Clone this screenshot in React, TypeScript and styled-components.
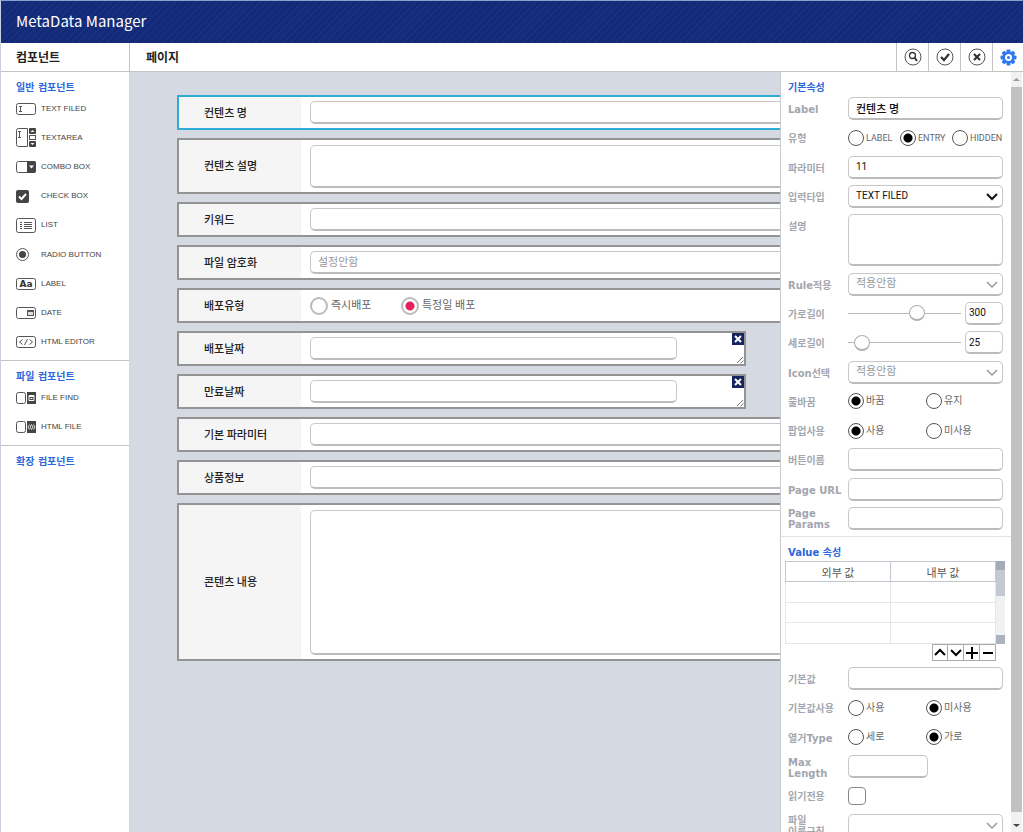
import React from 'react';
import styled, { createGlobalStyle, css } from 'styled-components';

const KR = '"Noto Sans CJK KR", sans-serif';

const GlobalStyle = createGlobalStyle`
  *, *::before, *::after { box-sizing: border-box; }
  html, body, #root { height: 100%; }
  body { margin: 0; overflow: hidden; font-family: "Liberation Sans", ${KR}; background: #fff; }
  button, input, select, textarea { font-family: inherit; margin: 0; }
  h1, h2, h3, ul { margin: 0; padding: 0; }
  ul { list-style: none; }
`;

const Page = styled.div`
  display: flex;
  flex-direction: column;
  height: 100%;
  border: 1px solid #c9cfdf;
  border-top-color: #8d9fcf;
  border-bottom: 0;
`;

const Header = styled.header`
  flex: none;
  height: 42px;
  padding: 0 0 2px 15px;
  display: flex;
  align-items: center;
  background: repeating-linear-gradient(135deg, #122a78 0 3px, #182f7f 3px 5px);
`;

const AppTitle = styled.h1`
  font: 400 15px/20px ${KR};
  color: #fff;
`;

const TopBar = styled.div`
  flex: none;
  height: 29px;
  display: flex;
  border-bottom: 1px solid #c4c4c4;
`;

const BarTitle = styled.h2<{ $side?: boolean }>`
  font: 700 12px/27px ${KR};
  color: #222;
  padding-left: ${p => (p.$side ? 15 : 16)}px;
  ${p => (p.$side ? css`width: 129px; border-right: 1px solid #c4c4c4;` : css`flex: 1;`)}
`;

const ToolButton = styled.button`
  width: 32px;
  padding: 0;
  border: 0;
  border-left: 1px solid #c4c4c4;
  background: none;
  display: flex;
  align-items: center;
  justify-content: center;
  &:last-child { width: 31px; }
`;

const Body = styled.div`
  flex: 1;
  min-height: 0;
  display: flex;
`;

const Sidebar = styled.nav`
  flex: none;
  width: 129px;
  border-right: 1px solid #d4d8e0;
  background: #fff;
`;

const SideGroup = styled.section`
  padding: 9px 0 3px;
  border-bottom: 1px solid #c4c4c4;
  &:last-child { border-bottom: 0; }
`;

const SectionTitle = styled.h3<{ $left: number }>`
  font: 700 10px/13px "DejaVu Sans", ${KR};
  color: #2a66dc;
  padding-left: ${p => p.$left}px;
`;

const ItemList = styled.ul<{ $height: number }>`
  display: flex;
  flex-direction: column;
  height: ${p => p.$height}px;
`;

const Item = styled.li`
  flex: 1;
  display: flex;
`;

const ItemButton = styled.button`
  flex: 1;
  display: flex;
  align-items: center;
  padding: 0 0 0 15px;
  border: 0;
  background: none;
  font-size: 8px;
  line-height: 12px;
  color: #444;
`;

const ItemIcon = styled.span`
  width: 25px;
  display: flex;
`;

const Canvas = styled.main`
  flex: 1;
  min-width: 0;
  overflow: hidden;
  padding: 23px 0 0 47px;
  background: #d5d9e2;
  display: flex;
  flex-direction: column;
  align-items: flex-start;
  gap: 8px;
`;

const Card = styled.div<{ $height: number; $active?: boolean; $short?: boolean }>`
  flex: none;
  position: relative;
  display: flex;
  width: ${p => (p.$short ? '569px' : '120%')};
  height: ${p => p.$height}px;
  border: 2px solid ${p => (p.$active ? '#2fabd8' : '#949494')};
  background: #fff;
`;

const CardLabel = styled.label`
  width: 122px;
  padding: 0 0 2px 25px;
  display: flex;
  align-items: center;
  background: #f5f5f5;
  font: 500 11px/16px ${KR};
  color: #222;
`;

const CardBody = styled.div`
  flex: 1;
  display: flex;
  align-items: center;
  padding: 0 9px;
`;

const box = css`
  display: block;
  border: 1px solid #c8c8c8;
  border-bottom: 2px solid #bcbcbc;
  border-radius: 5px;
  background: #fff;
  outline: 0;
  padding: 0 7px;
`;

const Input = styled.input<{ $width?: number; $size?: number; $tight?: boolean }>`
  ${box}
  width: ${p => (p.$width ? `${p.$width}px` : '100%')};
  height: 23px;
  font: ${p => (p.$size ? 400 : 500)} ${p => p.$size ?? 11}px/20px Roboto, ${KR};
  color: #111;
  padding: 0 ${p => (p.$tight ? 3 : 7)}px;
`;

const Area = styled.textarea<{ $height: number }>`
  ${box}
  width: 100%;
  height: ${p => p.$height}px;
  resize: none;
`;

const SelectWrap = styled.div`
  position: relative;
  width: 100%;
`;

const SelectBox = styled.select<{ $dim?: boolean }>`
  ${box}
  appearance: none;
  width: 100%;
  height: 23px;
  font: 400 ${p => (p.$dim ? 11 : 10)}px/19px Roboto, ${KR};
  color: ${p => (p.$dim ? '#999' : '#111')};
`;

const Chevron = styled.svg`
  position: absolute;
  right: 5px;
  top: 8px;
  pointer-events: none;
`;

const Radio = styled.input<{ $tone?: 'pink' }>`
  appearance: none;
  flex: none;
  width: ${p => (p.$tone ? 18 : 16)}px;
  height: ${p => (p.$tone ? 18 : 16)}px;
  border: ${p => (p.$tone ? '2px solid #bbb' : '1px solid #555')};
  border-radius: 50%;
  background: #fff;
  &:checked {
    background: radial-gradient(circle, ${p => (p.$tone ? '#e3225c' : '#000')} 0 4px, #fff 5px);
  }
`;

const RadioLabel = styled.label<{ $width: number; $size: number }>`
  flex: none;
  width: ${p => p.$width}px;
  display: flex;
  align-items: center;
  gap: ${p => (p.$size > 10 ? 3 : 2)}px;
  font: 400 ${p => p.$size}px/16px Roboto, ${KR};
  color: #666;
  white-space: nowrap;
`;

const RadioRow = styled.div`
  display: flex;
`;

const CloseButton = styled.button`
  position: absolute;
  top: 0;
  right: 0;
  width: 12px;
  height: 12px;
  padding: 0;
  border: 0;
  background: #16245f;
  display: flex;
  align-items: center;
  justify-content: center;
`;

const Grip = styled.svg`
  position: absolute;
  right: 0;
  bottom: 0;
`;

const Panel = styled.aside`
  flex: none;
  width: 243px;
  display: flex;
  border-left: 1px solid #c9ccd2;
  background: #fff;
`;

const PanelScroll = styled.div`
  flex: 1;
  overflow: hidden;
`;

const Group = styled.section`
  padding: 9px 0 3px;
  & + & { border-top: 1px solid #e2e2e2; }
`;

const Rows = styled.div<{ $height: number }>`
  display: flex;
  flex-direction: column;
  height: ${p => p.$height}px;
  padding: 0 8px 0 7px;
`;

const Row = styled.div<{ $units?: number }>`
  flex: ${p => p.$units ?? 1} 1 0;
  min-height: 0;
  display: flex;
  align-items: center;
`;

const RowLabel = styled.label<{ $top?: boolean }>`
  flex: none;
  width: 60px;
  padding: ${p => (p.$top ? 10 : 2)}px 5px 0 0;
  align-self: ${p => (p.$top ? 'flex-start' : 'center')};
  font: 700 10px/11px "DejaVu Sans", ${KR};
  word-break: keep-all;
  color: #a3a6ae;
`;

const RowControl = styled.div`
  flex: 1;
  min-width: 0;
  display: flex;
  align-items: center;
  gap: 4px;
`;

const Slider = styled.input`
  appearance: none;
  flex: 1;
  min-width: 0;
  height: 18px;
  background: linear-gradient(#b8b8b8, #b8b8b8) center / 100% 1px no-repeat;
  &::-webkit-slider-thumb {
    appearance: none;
    width: 16px;
    height: 16px;
    border: 1px solid #b0b0b0;
    border-bottom-width: 2px;
    border-radius: 50%;
    background: #fff;
  }
`;

const CheckBox = styled.input`
  appearance: none;
  width: 18px;
  height: 18px;
  border: 1px solid #888;
  border-radius: 4px;
  background: #fff;
`;

const TableWrap = styled.div`
  display: flex;
  height: 83px;
  margin: 2px 6px 0 4px;
`;

const Table = styled.table`
  flex: 1;
  border-collapse: collapse;
  table-layout: fixed;
  border: 1px solid #bfc3ca;
  th { height: 20px; padding: 0; font: 400 11px/18px ${KR}; color: #555; border: 1px solid #c4c7cd; }
  td { padding: 0; border: 1px solid #e6e6e6; }
`;

const MiniTrack = styled.div`
  width: 9px;
  background: #f0f1f3;
  display: flex;
  flex-direction: column;
  &::before { content: ''; height: 35px; background: #c3c8d1; border-top: 9px solid #a3abb8; }
  &::after { content: ''; height: 9px; margin-top: auto; background: #adb3bd; }
`;

const MiniButtons = styled.div`
  display: flex;
  justify-content: flex-end;
  padding-right: 15px;
  margin-bottom: 3px;
`;

const MiniButton = styled.button`
  width: 16px;
  height: 17px;
  padding: 0;
  border: 1px solid #aaa;
  background: #fff;
  display: flex;
  align-items: center;
  justify-content: center;
  & + & { border-left: 0; }
`;

const Scrollbar = styled.div`
  flex: none;
  width: 12px;
  display: flex;
  flex-direction: column;
  align-items: center;
  background: #f1f1f1;
  border-right: 1px solid #fff;
`;

const ScrollArrow = styled.svg`
  flex: none;
  margin: 4px 0;
`;

const ScrollThumb = styled.div`
  flex: 1;
  width: 100%;
  background: #c1c1c1;
`;

const Svg = ({ w = 20, h = 12, children }: { w?: number; h?: number; children: React.ReactNode }) => (
  <svg width={w} height={h} viewBox={`0 0 ${w} ${h}`} fill="none" stroke="#555" strokeWidth="1" aria-hidden="true">
    {children}
  </svg>
);

const icons = {
  text: (
    <Svg><rect x=".5" y=".5" width="19" height="11" rx="2" /><path d="M3 3.500h3M3 8.500h3M4.500 3.500v5" /></Svg>
  ),
  area: (
    <Svg h={19}>
      <path d="M11.500 .500H2.500a2 2 0 0 0-2 2v14a2 2 0 0 0 2 2h9zM2 3.500h3M2 9.500h3M3.500 3.500v6" />
      <rect x="13" y="0" width="7" height="6" rx="1" fill="#444" stroke="none" />
      <rect x="13" y="13" width="7" height="6" rx="1" fill="#444" stroke="none" />
      <rect x="13.500" y="7.500" width="6" height="4" />
      <path d="M14.500 4h4l-2-2zM14.500 15h4l-2 2z" fill="#fff" stroke="none" />
    </Svg>
  ),
  combo: (
    <Svg>
      <rect x=".5" y=".5" width="19" height="11" rx="2" />
      <path d="M11 0h7a2 2 0 0 1 2 2v8a2 2 0 0 1-2 2h-7z" fill="#444" stroke="none" />
      <path d="M13 4.500h5l-2.500 3z" fill="#fff" stroke="none" />
    </Svg>
  ),
  check: (
    <Svg w={13} h={13}>
      <rect width="13" height="13" rx="2" fill="#444" stroke="none" />
      <path d="M3 6.500l2.500 2.500l4.500-5" stroke="#fff" strokeWidth="2" />
    </Svg>
  ),
  list: (
    <Svg h={15}>
      <rect x=".5" y=".5" width="19" height="14" rx="2" />
      <path d="M4 4.500h2M8 4.500h8M4 6.500h2M8 6.500h8M4 8.500h2M8 8.500h8M4 10.500h2M8 10.500h8" />
    </Svg>
  ),
  radio: (
    <Svg w={13} h={13}><circle cx="6.500" cy="6.500" r="6" /><circle cx="6.500" cy="6.500" r="3.500" fill="#444" stroke="none" /></Svg>
  ),
  label: (
    <Svg>
      <rect x=".5" y=".5" width="19" height="11" rx="2" />
      <text x="10" y="9" textAnchor="middle" fontSize="9" fontWeight="700" fontFamily="DejaVu Sans" fill="#333" stroke="none">Aa</text>
    </Svg>
  ),
  date: (
    <Svg>
      <rect x=".5" y=".5" width="19" height="11" rx="2" />
      <rect x="11.500" y="3.500" width="6" height="5" fill="#ddd" /><path d="M11 4h7" strokeWidth="2" />
    </Svg>
  ),
  html: (
    <Svg>
      <rect x=".5" y=".5" width="19" height="11" rx="2" />
      <path d="M6.500 3.500L3.500 6l3 2.500M13.500 3.500l3 2.500l-3 2.500M11.500 3L8.500 9" />
    </Svg>
  ),
  file: (
    <Svg>
      <rect x=".5" y=".5" width="9" height="11" rx="2" /><rect x="11" width="9" height="12" fill="#444" stroke="none" />
      <path d="M13 3.500h5v5h-5zM13 4.500h5M14.500 6.500h2" stroke="#fff" />
    </Svg>
  ),
  htmlFile: (
    <Svg>
      <rect x=".5" y=".5" width="9" height="11" rx="2" /><rect x="11" width="9" height="12" fill="#444" stroke="none" />
      <path d="M13.500 3.500L12 6l1.500 2.500M17.500 3.500L19 6l-1.500 2.500M15.500 3.500L14 6l1.500 2.500L17 6z" stroke="#fff" strokeWidth=".8" />
    </Svg>
  ),
};

type IconName = keyof typeof icons;

const Palette = ({ title, height, items }: { title: string; height: number; items: [IconName, string][] }) => (
  <SideGroup>
    <SectionTitle $left={15}>{title}</SectionTitle>
    {items.length > 0 && (
      <ItemList $height={height}>
        {items.map(([icon, name]) => (
          <Item key={name}>
            <ItemButton type="button"><ItemIcon>{icons[icon]}</ItemIcon>{name}</ItemButton>
          </Item>
        ))}
      </ItemList>
    )}
  </SideGroup>
);

const Round = ({ children }: { children: React.ReactNode }) => (
  <svg width="18" height="18" viewBox="0 0 18 18" fill="none" stroke="#333" aria-hidden="true">
    <circle cx="9" cy="9" r="8" stroke="#555" />
    {children}
  </svg>
);

const Gear = () => (
  <svg width="17" height="17" viewBox="-8.500 -8.500 17 17" aria-hidden="true">
    {[0, 45, 90, 135].map(a => (
      <rect key={a} x="-2" y="-8" width="4" height="16" rx="1" fill="#2f78f0" transform={`rotate(${a})`} />
    ))}
    <circle r="5.800" fill="#2f78f0" />
    <circle r="3.500" fill="#fff" />
    <circle r="1.500" fill="#2f78f0" />
  </svg>
);

const Dropdown = ({ id, value, dim }: { id: string; value: string; dim?: boolean }) => (
  <SelectWrap>
    <SelectBox id={id} $dim={dim}><option>{value}</option></SelectBox>
    <Chevron width="12" height="8" viewBox="0 0 12 8" fill="none" stroke={dim ? '#999' : '#111'} strokeWidth={dim ? 1.5 : 2} aria-hidden="true">
      <path d="M1 1l5 5l5-5" />
    </Chevron>
  </SelectWrap>
);

const Radios = ({ name, options, selected, width, size = 10, tone }: {
  name: string; options: string[]; selected: number; width: number; size?: number; tone?: 'pink';
}) => (
  <RadioRow role="radiogroup">
    {options.map((o, i) => (
      <RadioLabel key={o} $width={width} $size={size}>
        <Radio type="radio" name={name} defaultChecked={i === selected} $tone={tone} />
        {o}
      </RadioLabel>
    ))}
  </RadioRow>
);

const Property = ({ id, label, units, children }: {
  id?: string; label: string; units?: number; children: React.ReactNode;
}) => (
  <Row $units={units}>
    <RowLabel as={id ? 'label' : 'span'} htmlFor={id} $top={!!units}>{label}</RowLabel>
    <RowControl>{children}</RowControl>
  </Row>
);

const Field = ({ id, label, height = 35, active, short, children }: {
  id?: string; label: string; height?: number; active?: boolean; short?: boolean; children: React.ReactNode;
}) => (
  <Card $height={height} $active={active} $short={short}>
    <CardLabel as={id ? 'label' : 'span'} htmlFor={id}>{label}</CardLabel>
    <CardBody>{children}</CardBody>
    {short && (
      <>
        <CloseButton type="button" aria-label="삭제">
          <svg width="8" height="8" viewBox="0 0 8 8" stroke="#fff" strokeWidth="2" aria-hidden="true"><path d="M1 1l6 6M7 1l-6 6" /></svg>
        </CloseButton>
        <Grip width="8" height="8" viewBox="0 0 8 8" stroke="#777" aria-hidden="true"><path d="M1 7l6-6M4.500 7.500l3-3" /></Grip>
      </>
    )}
  </Card>
);

const miniIcons: [string, string][] = [
  ['위로', 'M1 8l5-5l5 5'],
  ['아래로', 'M1 3l5 5l5-5'],
  ['추가', 'M6 0v12M0 6h12'],
  ['삭제', 'M1 6h10'],
];

export default function App() {
  return (
    <>
      <GlobalStyle />
      <Page>
        <Header><AppTitle>MetaData Manager</AppTitle></Header>
        <TopBar>
          <BarTitle $side>컴포넌트</BarTitle>
          <BarTitle>페이지</BarTitle>
          <ToolButton type="button" aria-label="검색">
            <Round><circle cx="8.500" cy="7.500" r="3" strokeWidth="1.300" /><path d="M10.500 9.500l2.500 3.500" strokeWidth="2" /></Round>
          </ToolButton>
          <ToolButton type="button" aria-label="확인">
            <Round><path d="M5 9l3 3l5-6" strokeWidth="2.200" /></Round>
          </ToolButton>
          <ToolButton type="button" aria-label="닫기">
            <Round><path d="M6 6l6 6M12 6l-6 6" strokeWidth="2.200" /></Round>
          </ToolButton>
          <ToolButton type="button" aria-label="설정"><Gear /></ToolButton>
        </TopBar>
        <Body>
          <Sidebar>
            <Palette title="일반 컴포넌트" height={263} items={[
              ['text', 'TEXT FILED'], ['area', 'TEXTAREA'], ['combo', 'COMBO BOX'], ['check', 'CHECK BOX'], ['list', 'LIST'],
              ['radio', 'RADIO BUTTON'], ['label', 'LABEL'], ['date', 'DATE'], ['html', 'HTML EDITOR'],
            ]} />
            <Palette title="파일 컴포넌트" height={59} items={[['file', 'FILE FIND'], ['htmlFile', 'HTML FILE']]} />
            <Palette title="확장 컴포넌트" height={0} items={[]} />
          </Sidebar>
          <Canvas>
            <Field id="c-name" label="컨텐츠 명" active><Input id="c-name" /></Field>
            <Field id="c-desc" label="컨텐츠 설명" height={56}><Area id="c-desc" $height={43} /></Field>
            <Field id="c-key" label="키워드"><Input id="c-key" /></Field>
            <Field id="c-enc" label="파일 암호화"><Dropdown id="c-enc" value="설정안함" dim /></Field>
            <Field label="배포유형">
              <Radios name="deploy" options={['즉시배포', '특정일 배포']} selected={1} width={91} size={11} tone="pink" />
            </Field>
            <Field id="c-date" label="배포날짜" short><Input id="c-date" $width={367} /></Field>
            <Field id="c-exp" label="만료날짜" short><Input id="c-exp" $width={367} /></Field>
            <Field id="c-param" label="기본 파라미터"><Input id="c-param" /></Field>
            <Field id="c-prod" label="상품정보"><Input id="c-prod" /></Field>
            <Field id="c-body" label="콘텐츠 내용" height={158}><Area id="c-body" $height={145} /></Field>
          </Canvas>
          <Panel>
            <PanelScroll>
              <Group>
                <SectionTitle $left={7}>기본속성</SectionTitle>
                <Rows $height={439}>
                  <Property id="p-label" label="Label"><Input id="p-label" defaultValue="컨텐츠 명" /></Property>
                  <Property label="유형"><Radios name="kind" options={['LABEL', 'ENTRY', 'HIDDEN']} selected={1} width={52} size={9} /></Property>
                  <Property id="p-param" label="파라미터"><Input id="p-param" $size={10} defaultValue="11" /></Property>
                  <Property id="p-type" label="입력타입"><Dropdown id="p-type" value="TEXT FILED" /></Property>
                  <Property id="p-desc" label="설명" units={2}><Area id="p-desc" $height={52} /></Property>
                  <Property id="p-rule" label="Rule적용"><Dropdown id="p-rule" value="적용안함" dim /></Property>
                  <Property id="p-w" label="가로길이">
                    <Slider id="p-w" type="range" min={0} max={480} defaultValue={300} />
                    <Input aria-label="가로길이 값" $width={38} $size={10} $tight defaultValue="300" />
                  </Property>
                  <Property id="p-h" label="세로길이">
                    <Slider id="p-h" type="range" min={0} max={400} defaultValue={25} />
                    <Input aria-label="세로길이 값" $width={38} $size={10} $tight defaultValue="25" />
                  </Property>
                  <Property id="p-icon" label="Icon선택"><Dropdown id="p-icon" value="적용안함" dim /></Property>
                  <Property label="줄바꿈"><Radios name="wrap" options={['바꿈', '유지']} selected={0} width={78} /></Property>
                  <Property label="팝업사용"><Radios name="popup" options={['사용', '미사용']} selected={0} width={78} /></Property>
                  <Property id="p-btn" label="버튼이름"><Input id="p-btn" /></Property>
                  <Property id="p-url" label="Page URL"><Input id="p-url" /></Property>
                  <Property id="p-params" label="Page Params"><Input id="p-params" /></Property>
                </Rows>
              </Group>
              <Group>
                <SectionTitle $left={7}>Value 속성</SectionTitle>
                <TableWrap>
                  <Table>
                    <thead><tr><th>외부 값</th><th>내부 값</th></tr></thead>
                    <tbody>
                      <tr><td /><td /></tr>
                      <tr><td /><td /></tr>
                      <tr><td /><td /></tr>
                    </tbody>
                  </Table>
                  <MiniTrack />
                </TableWrap>
                <MiniButtons>
                  {miniIcons.map(([name, d]) => (
                    <MiniButton key={name} type="button" aria-label={name}>
                      <svg width="12" height="12" viewBox="0 0 12 12" fill="none" stroke="#000" strokeWidth="2" aria-hidden="true"><path d={d} /></svg>
                    </MiniButton>
                  ))}
                </MiniButtons>
                <Rows $height={176}>
                  <Property id="v-def" label="기본값"><Input id="v-def" /></Property>
                  <Property label="기본값사용"><Radios name="usedef" options={['사용', '미사용']} selected={1} width={78} /></Property>
                  <Property label="열거Type"><Radios name="dir" options={['세로', '가로']} selected={1} width={78} /></Property>
                  <Property id="v-max" label="Max Length"><Input id="v-max" $width={80} /></Property>
                  <Property id="v-ro" label="읽기전용"><CheckBox id="v-ro" type="checkbox" /></Property>
                  <Property id="v-file" label="파일 이름규칙"><Dropdown id="v-file" value="" dim /></Property>
                </Rows>
              </Group>
            </PanelScroll>
            <Scrollbar>
              <ScrollArrow width="7" height="7" viewBox="0 0 7 7"><path d="M0 5h7L3.500 2z" fill="#999" /></ScrollArrow>
              <ScrollThumb />
              <ScrollArrow width="7" height="12" viewBox="0 0 7 12"><path d="M0 8h7L3.500 11z" fill="#444" /></ScrollArrow>
            </Scrollbar>
          </Panel>
        </Body>
      </Page>
    </>
  );
}
